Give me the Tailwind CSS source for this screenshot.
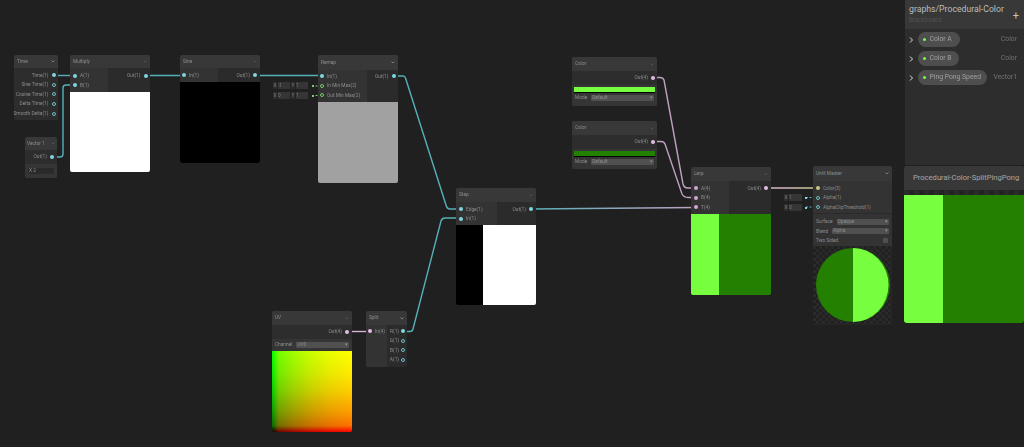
<!DOCTYPE html>
<html lang="en">
<head>
<meta charset="UTF-8">
<title>graphs/Procedural-Color</title>
<script src="https://cdn.jsdelivr.net/npm/@tailwindcss/browser@4"></script>
</head>
<body class="bg-[#202020]">
<div class="relative w-[1024px] h-[447px] overflow-hidden bg-[#202020] blur-[0.35px] font-['Roboto',sans-serif] text-[4.800px] leading-[9.600px] text-[#8e8e8e]">

  <!-- wires sit under the nodes -->
  <svg class="absolute left-0 top-0" width="1024" height="447" fill="none" stroke-width="1.400">
    <defs>
      <linearGradient id="stepLerp" gradientUnits="userSpaceOnUse" x1="531" y1="0" x2="696" y2="0">
        <stop offset="0" stop-color="#56b0b8"/><stop offset="1" stop-color="#c0a0c0"/>
      </linearGradient>
      <linearGradient id="lerpMaster" gradientUnits="userSpaceOnUse" x1="766" y1="0" x2="818" y2="0">
        <stop offset="0" stop-color="#d8b4d8"/><stop offset="1" stop-color="#c9c58a"/>
      </linearGradient>
    </defs>
    <g stroke="#56b0b8">
      <path d="M54 75.500H74"/>
      <path d="M52 157H60Q63 157 63 154V88Q63 85 66 85H74"/>
      <path d="M145 75.500H184"/>
      <path d="M255 75.500H322"/>
      <path d="M393 76H403Q405 76 405.500 78L446 205Q447 209 450 209H461"/>
      <path d="M403 331.500H410Q412.500 331.500 413 329L441 221Q442 218 445 218H461"/>
    </g>
    <path d="M531 209L696 207.500" stroke="url(#stepLerp)"/>
    <path d="M766 188H818" stroke="url(#lerpMaster)"/>
    <g stroke="#c0a0c0">
      <path d="M653 77.500H660Q663 77.500 664 80L683 184Q684 188 688 188H696"/>
      <path d="M653 141.500H661Q664 141.500 665 144L682 194Q684 197.500 688 197.500H696"/>
      <path d="M347 331.500H370" stroke="#d8b4d8"/>
    </g>
    <g stroke="#7fc96f" stroke-dasharray="2 1.500" stroke-width="1">
      <path d="M312 86H322"/>
      <path d="M312 95.500H322"/>
    </g>
    <g stroke="#56b0b8" stroke-dasharray="2 1.500" stroke-width="1">
      <path d="M806 197.500H818"/>
      <path d="M806 207H818"/>
    </g>
  </svg>

  <!-- Time -->
  <div class="absolute left-[14px] top-[55px] w-[44px] h-[65px] rounded-[2px] bg-[#2d2d2d] flex flex-col">
    <div class="h-[13px] shrink-0 bg-[#383838] rounded-t-[2px] px-[3px] flex items-center justify-between"><span>Time</span><svg width="4" height="3" viewBox="0 0 4 3" fill="none" stroke="#999" stroke-width=".7"><path d="M.5.5 2 2 3.500.5"/></svg></div>
    <div class="flex flex-col items-end pt-[2.500px] pr-[2.500px]">
      <div class="flex items-center gap-[3px] h-[9.600px]"><span>Time(1)</span><span class="w-[4px] h-[4px] rounded-full bg-[#7fd6de]"></span></div>
      <div class="flex items-center gap-[3px] h-[9.600px]"><span>Sine Time(1)</span><span class="w-[4px] h-[4px] rounded-full border border-[#6cc0c8]"></span></div>
      <div class="flex items-center gap-[3px] h-[9.600px]"><span>Cosine Time(1)</span><span class="w-[4px] h-[4px] rounded-full border border-[#6cc0c8]"></span></div>
      <div class="flex items-center gap-[3px] h-[9.600px]"><span>Delta Time(1)</span><span class="w-[4px] h-[4px] rounded-full border border-[#6cc0c8]"></span></div>
      <div class="flex items-center gap-[3px] h-[9.600px] whitespace-nowrap"><span>Smooth Delta(1)</span><span class="w-[4px] h-[4px] rounded-full border border-[#6cc0c8]"></span></div>
    </div>
  </div>

  <!-- Vector 1 -->
  <div class="absolute left-[25px] top-[137px] w-[32px] h-[41px] rounded-[2px] bg-[#2d2d2d] flex flex-col">
    <div class="h-[13px] shrink-0 bg-[#383838] rounded-t-[2px] px-[2px] flex items-center justify-between"><span class="whitespace-nowrap">Vector 1</span><svg width="4" height="3" viewBox="0 0 4 3" fill="none" stroke="#5a5a5a" stroke-width=".7"><path d="M.5.5 2 2 3.500.5"/></svg></div>
    <div class="flex items-center justify-end gap-[3px] h-[14px] pr-[3px]"><span>Out(1)</span><span class="w-[4px] h-[4px] rounded-full bg-[#7fd6de]"></span></div>
    <div class="flex-1 bg-[#353535] rounded-b-[2px] flex items-center px-[3px]"><span class="w-full h-[6px] bg-[#2a2a2a] leading-[6px] px-[1px]">X 2</span></div>
  </div>

  <!-- Multiply -->
  <div class="absolute left-[70px] top-[55px] w-[80px] h-[117px] rounded-[2px] bg-[#2b2b2b] flex flex-col overflow-hidden">
    <div class="h-[13px] shrink-0 bg-[#383838] px-[3px] flex items-center justify-between"><span>Multiply</span><svg width="4" height="3" viewBox="0 0 4 3" fill="none" stroke="#5a5a5a" stroke-width=".7"><path d="M.5.5 2 2 3.500.5"/></svg></div>
    <div class="h-[24px] shrink-0 flex">
      <div class="w-[38px] bg-[#333333] pt-[3px] pl-[3px]">
        <div class="flex items-center gap-[3px] h-[9.600px]"><span class="w-[4px] h-[4px] rounded-full bg-[#7fd6de]"></span><span>A(1)</span></div>
        <div class="flex items-center gap-[3px] h-[9.600px]"><span class="w-[4px] h-[4px] rounded-full bg-[#7fd6de]"></span><span>B(1)</span></div>
      </div>
      <div class="flex-1 pt-[3px] pr-[2.500px]">
        <div class="flex items-center justify-end gap-[3px] h-[9.600px]"><span>Out(1)</span><span class="w-[4px] h-[4px] rounded-full bg-[#7fd6de]"></span></div>
      </div>
    </div>
    <div class="flex-1 bg-white"></div>
  </div>

  <!-- Sine -->
  <div class="absolute left-[180px] top-[55px] w-[80px] h-[108px] rounded-[2px] bg-[#2b2b2b] flex flex-col overflow-hidden">
    <div class="h-[13px] shrink-0 bg-[#383838] px-[3px] flex items-center justify-between"><span>Sine</span><svg width="4" height="3" viewBox="0 0 4 3" fill="none" stroke="#5a5a5a" stroke-width=".7"><path d="M.5.5 2 2 3.500.5"/></svg></div>
    <div class="h-[14px] shrink-0 flex">
      <div class="w-[38px] bg-[#333333] pt-[2.500px] pl-[2px]">
        <div class="flex items-center gap-[3px] h-[9.600px]"><span class="w-[4px] h-[4px] rounded-full bg-[#7fd6de]"></span><span>In(1)</span></div>
      </div>
      <div class="flex-1 pt-[2.500px] pr-[3px]">
        <div class="flex items-center justify-end gap-[3px] h-[9.600px]"><span>Out(1)</span><span class="w-[4px] h-[4px] rounded-full bg-[#7fd6de]"></span></div>
      </div>
    </div>
    <div class="flex-1 bg-black"></div>
  </div>

  <!-- Remap inline values -->
  <div class="absolute left-[273px] top-[82px] w-[44px] h-[7.500px] flex items-center gap-[1px] leading-[7px] text-[#7c7c7c]">
    <span class="bg-[#2d2d2d] w-[4px] text-center">X</span><span class="bg-[#353535] w-[12px]">-1</span><span class="bg-[#2d2d2d] w-[4px] text-center">Y</span><span class="bg-[#353535] w-[12px]">1</span><span class="w-[2px] h-[2px] ml-[3px] bg-[#7fc96f]"></span>
  </div>
  <div class="absolute left-[273px] top-[92px] w-[44px] h-[7.500px] flex items-center gap-[1px] leading-[7px] text-[#7c7c7c]">
    <span class="bg-[#2d2d2d] w-[4px] text-center">X</span><span class="bg-[#353535] w-[12px]">0</span><span class="bg-[#2d2d2d] w-[4px] text-center">Y</span><span class="bg-[#353535] w-[12px]">1</span><span class="w-[2px] h-[2px] ml-[3px] bg-[#7fc96f]"></span>
  </div>

  <!-- Remap -->
  <div class="absolute left-[318px] top-[55px] w-[80px] h-[128px] rounded-[2px] bg-[#2b2b2b] flex flex-col overflow-hidden">
    <div class="h-[15px] shrink-0 bg-[#383838] px-[3px] flex items-center justify-between"><span>Remap</span><svg width="4" height="3" viewBox="0 0 4 3" fill="none" stroke="#999" stroke-width=".7"><path d="M.5.5 2 2 3.500.5"/></svg></div>
    <div class="h-[32px] shrink-0 flex">
      <div class="w-[49px] bg-[#333333] pt-[1.500px] pl-[2px] whitespace-nowrap">
        <div class="flex items-center gap-[3px] h-[9.600px]"><span class="w-[4px] h-[4px] rounded-full bg-[#7fd6de]"></span><span>In(1)</span></div>
        <div class="flex items-center gap-[3px] h-[9.600px]"><span class="w-[4px] h-[4px] rounded-full border border-[#7fc96f]"></span><span>In Min Max(2)</span></div>
        <div class="flex items-center gap-[3px] h-[9.600px]"><span class="w-[4px] h-[4px] rounded-full border border-[#7fc96f]"></span><span>Out Min Max(2)</span></div>
      </div>
      <div class="flex-1 pt-[1.500px] pr-[2.500px]">
        <div class="flex items-center justify-end gap-[3px] h-[9.600px]"><span>Out(1)</span><span class="w-[4px] h-[4px] rounded-full bg-[#7fd6de]"></span></div>
      </div>
    </div>
    <div class="flex-1 bg-[#a1a1a1]"></div>
  </div>

  <!-- Step -->
  <div class="absolute left-[456px] top-[188px] w-[80px] h-[117px] rounded-[2px] bg-[#2b2b2b] flex flex-col overflow-hidden">
    <div class="h-[14px] shrink-0 bg-[#383838] px-[3px] flex items-center justify-between"><span>Step</span><svg width="4" height="3" viewBox="0 0 4 3" fill="none" stroke="#5a5a5a" stroke-width=".7"><path d="M.5.5 2 2 3.500.5"/></svg></div>
    <div class="h-[23px] shrink-0 flex">
      <div class="w-[41px] bg-[#333333] pt-[2.500px] pl-[3px]">
        <div class="flex items-center gap-[3px] h-[9.600px]"><span class="w-[4px] h-[4px] rounded-full bg-[#7fd6de]"></span><span>Edge(1)</span></div>
        <div class="flex items-center gap-[3px] h-[9.600px]"><span class="w-[4px] h-[4px] rounded-full bg-[#7fd6de]"></span><span>In(1)</span></div>
      </div>
      <div class="flex-1 pt-[2.500px] pr-[3px]">
        <div class="flex items-center justify-end gap-[3px] h-[9.600px]"><span>Out(1)</span><span class="w-[4px] h-[4px] rounded-full bg-[#7fd6de]"></span></div>
      </div>
    </div>
    <div class="flex-1 flex"><div class="w-[27px] bg-black"></div><div class="flex-1 bg-white"></div></div>
  </div>

  <!-- UV -->
  <div class="absolute left-[272px] top-[311px] w-[80px] h-[121px] rounded-[2px] bg-[#2d2d2d] flex flex-col overflow-hidden">
    <div class="h-[14px] shrink-0 bg-[#383838] px-[3px] flex items-center justify-between"><span>UV</span><svg width="4" height="3" viewBox="0 0 4 3" fill="none" stroke="#5a5a5a" stroke-width=".7"><path d="M.5.5 2 2 3.500.5"/></svg></div>
    <div class="h-[14px] shrink-0 flex items-center justify-end gap-[3px] pr-[3px]"><span>Out(4)</span><span class="w-[4px] h-[4px] rounded-full bg-[#e2bde2]"></span></div>
    <div class="h-[12px] shrink-0 bg-[#353535] flex items-center gap-[4px] px-[3px]"><span>Channel</span><span class="flex-1 h-[6px] rounded-[1px] bg-[#505050] leading-[6px] px-[1px] flex justify-between"><span>UV0</span><span>▾</span></span></div>
    <div class="relative flex-1 bg-[linear-gradient(to_right,#000,#700000_8%,#9c0000_25%,#cc0000_50%,#ec0000_75%,#ff0000)]">
      <div class="absolute inset-0 mix-blend-screen bg-[linear-gradient(to_top,#000,#007000_8%,#009c00_25%,#00cc00_50%,#00ec00_75%,#00ff00)]"></div>
    </div>
  </div>

  <!-- Split -->
  <div class="absolute left-[366px] top-[311px] w-[41px] h-[56px] rounded-[2px] bg-[#2b2b2b] flex flex-col overflow-hidden">
    <div class="h-[14px] shrink-0 bg-[#383838] px-[3px] flex items-center justify-between"><span>Split</span><svg width="4" height="3" viewBox="0 0 4 3" fill="none" stroke="#999" stroke-width=".7"><path d="M.5.5 2 2 3.500.5"/></svg></div>
    <div class="flex-1 flex">
      <div class="w-[21px] bg-[#333333] pt-[1.500px] pl-[2px]">
        <div class="flex items-center gap-[3px] h-[9.600px]"><span class="w-[4px] h-[4px] rounded-full bg-[#e2bde2]"></span><span>In(4)</span></div>
      </div>
      <div class="flex-1 pt-[1.500px] pr-[2px] flex flex-col items-end">
        <div class="flex items-center gap-[2px] h-[9.600px]"><span>R(1)</span><span class="w-[4px] h-[4px] rounded-full bg-[#7fd6de]"></span></div>
        <div class="flex items-center gap-[2px] h-[9.600px]"><span>G(1)</span><span class="w-[4px] h-[4px] rounded-full border border-[#6cc0c8]"></span></div>
        <div class="flex items-center gap-[2px] h-[9.600px]"><span>B(1)</span><span class="w-[4px] h-[4px] rounded-full border border-[#6cc0c8]"></span></div>
        <div class="flex items-center gap-[2px] h-[9.600px]"><span>A(1)</span><span class="w-[4px] h-[4px] rounded-full border border-[#6cc0c8]"></span></div>
      </div>
    </div>
  </div>

  <!-- Color A -->
  <div class="absolute left-[572px] top-[57px] w-[85px] h-[49px] rounded-[2px] bg-[#2d2d2d] flex flex-col overflow-hidden">
    <div class="h-[14px] shrink-0 bg-[#383838] px-[3px] flex items-center justify-between"><span>Color</span><svg width="4" height="3" viewBox="0 0 4 3" fill="none" stroke="#5a5a5a" stroke-width=".7"><path d="M.5.5 2 2 3.500.5"/></svg></div>
    <div class="h-[14px] shrink-0 flex items-center justify-end gap-[3px] pr-[2px]"><span>Out(4)</span><span class="w-[4px] h-[4px] rounded-full bg-[#e2bde2]"></span></div>
    <div class="flex-1 bg-[#353535] px-[2px] pt-[2px]">
      <div class="h-[6px] bg-[#77ff3f] border-b border-black"></div>
      <div class="flex items-center gap-[4px] h-[8px] mt-[1px] pl-[1px]"><span>Mode</span><span class="flex-1 h-[6px] mr-[1px] rounded-[1px] bg-[#505050] leading-[6px] px-[1px] flex justify-between"><span>Default</span><span>▾</span></span></div>
    </div>
  </div>

  <!-- Color B -->
  <div class="absolute left-[572px] top-[121px] w-[85px] h-[48px] rounded-[2px] bg-[#2d2d2d] flex flex-col overflow-hidden">
    <div class="h-[14px] shrink-0 bg-[#383838] px-[3px] flex items-center justify-between"><span>Color</span><svg width="4" height="3" viewBox="0 0 4 3" fill="none" stroke="#5a5a5a" stroke-width=".7"><path d="M.5.5 2 2 3.500.5"/></svg></div>
    <div class="h-[14px] shrink-0 flex items-center justify-end gap-[3px] pr-[2px]"><span>Out(4)</span><span class="w-[4px] h-[4px] rounded-full bg-[#e2bde2]"></span></div>
    <div class="flex-1 bg-[#353535] px-[2px] pt-[2px]">
      <div class="h-[6px] bg-[#238000] border-b border-black"></div>
      <div class="flex items-center gap-[4px] h-[8px] mt-[1px] pl-[1px]"><span>Mode</span><span class="flex-1 h-[6px] mr-[1px] rounded-[1px] bg-[#505050] leading-[6px] px-[1px] flex justify-between"><span>Default</span><span>▾</span></span></div>
    </div>
  </div>

  <!-- Lerp -->
  <div class="absolute left-[691px] top-[167px] w-[80px] h-[128px] rounded-[2px] bg-[#2b2b2b] flex flex-col overflow-hidden">
    <div class="h-[14px] shrink-0 bg-[#383838] px-[3px] flex items-center justify-between"><span>Lerp</span><svg width="4" height="3" viewBox="0 0 4 3" fill="none" stroke="#5a5a5a" stroke-width=".7"><path d="M.5.5 2 2 3.500.5"/></svg></div>
    <div class="h-[33px] shrink-0 flex">
      <div class="w-[38px] bg-[#333333] pt-[2.500px] pl-[3px]">
        <div class="flex items-center gap-[3px] h-[9.600px]"><span class="w-[4px] h-[4px] rounded-full bg-[#d3a7d3]"></span><span>A(4)</span></div>
        <div class="flex items-center gap-[3px] h-[9.600px]"><span class="w-[4px] h-[4px] rounded-full bg-[#d3a7d3]"></span><span>B(4)</span></div>
        <div class="flex items-center gap-[3px] h-[9.600px]"><span class="w-[4px] h-[4px] rounded-full bg-[#d3a7d3]"></span><span>T(4)</span></div>
      </div>
      <div class="flex-1 pt-[2.500px] pr-[3px]">
        <div class="flex items-center justify-end gap-[3px] h-[9.600px]"><span>Out(4)</span><span class="w-[4px] h-[4px] rounded-full bg-[#e2bde2]"></span></div>
      </div>
    </div>
    <div class="flex-1 flex"><div class="w-[28px] bg-[#77ff3f]"></div><div class="flex-1 bg-[#238000]"></div></div>
  </div>

  <!-- Unlit Master inline values -->
  <div class="absolute left-[784px] top-[194px] w-[24px] h-[7.500px] flex items-center gap-[1px] leading-[7px] text-[#7c7c7c]">
    <span class="bg-[#2d2d2d] w-[4px] text-center">X</span><span class="bg-[#353535] w-[13px]">1</span><span class="w-[2px] h-[2px] ml-[2px] bg-[#7fd6de]"></span>
  </div>
  <div class="absolute left-[784px] top-[204px] w-[24px] h-[7.500px] flex items-center gap-[1px] leading-[7px] text-[#7c7c7c]">
    <span class="bg-[#2d2d2d] w-[4px] text-center">X</span><span class="bg-[#353535] w-[13px]">0</span><span class="w-[2px] h-[2px] ml-[2px] bg-[#7fd6de]"></span>
  </div>

  <!-- Unlit Master -->
  <div class="absolute left-[813px] top-[166px] w-[79px] h-[159px] flex flex-col overflow-hidden rounded-[2px]">
    <div class="h-[15px] shrink-0 bg-[#383838] px-[3px] flex items-center justify-between"><span>Unlit Master</span><svg width="4" height="3" viewBox="0 0 4 3" fill="none" stroke="#999" stroke-width=".7"><path d="M.5.5 2 2 3.500.5"/></svg></div>
    <div class="h-[32px] shrink-0 bg-[#333333] pt-[2.500px] pl-[3px] whitespace-nowrap">
      <div class="flex items-center gap-[3px] h-[9.600px]"><span class="w-[4px] h-[4px] rounded-full bg-[#c9c58a]"></span><span>Color(3)</span></div>
      <div class="flex items-center gap-[3px] h-[9.600px]"><span class="w-[4px] h-[4px] rounded-full border border-[#6cc0c8]"></span><span>Alpha(1)</span></div>
      <div class="flex items-center gap-[3px] h-[9.600px]"><span class="w-[4px] h-[4px] rounded-full border border-[#6cc0c8]"></span><span>AlphaClipThreshold(1)</span></div>
    </div>
    <div class="h-[33px] shrink-0 bg-[#333333] border-t border-[#2a2a2a] px-[3px] pt-[3px]">
      <div class="flex items-center gap-[4px] h-[9.600px]"><span>Surface</span><span class="flex-1 h-[6px] rounded-[1px] bg-[#505050] leading-[6px] px-[1px] flex justify-between"><span>Opaque</span><span>▾</span></span></div>
      <div class="flex items-center gap-[4px] h-[9.600px]"><span>Blend</span><span class="flex-1 h-[6px] rounded-[1px] bg-[#505050] leading-[6px] px-[1px] flex justify-between"><span>Alpha</span><span>▾</span></span></div>
      <div class="flex items-center justify-between h-[9.600px]"><span>Two Sided</span><span class="w-[5px] h-[5px] mr-[1px] rounded-[1px] bg-[#505050]"></span></div>
    </div>
    <svg class="flex-1" viewBox="0 0 79 79" width="79" height="79">
      <defs>
        <pattern id="checker" width="6" height="6" patternUnits="userSpaceOnUse">
          <rect width="6" height="6" fill="#212121"/>
          <rect width="3" height="3" fill="#2a2a2a"/>
          <rect x="3" y="3" width="3" height="3" fill="#2a2a2a"/>
        </pattern>
      </defs>
      <rect width="79" height="79" fill="url(#checker)"/>
      <circle cx="40" cy="39" r="37" fill="#238000"/>
      <path d="M40 2A35.500 37 0 0 1 40 76Z" fill="#77ff3f"/>
    </svg>
  </div>

  <!-- Blackboard -->
  <div class="absolute left-[905px] top-0 w-[119px] h-[165px] bg-[#2d2d2d] flex flex-col">
    <div class="relative h-[29px] shrink-0 bg-[#383838] pl-[4px] pt-[3px]">
      <div class="text-[8.700px] leading-[12px] text-[#bcbcbc] whitespace-nowrap">graphs/Procedural-Color</div>
      <div class="text-[6.500px] leading-[9px] mt-[1px] text-[#505050]">Blackboard</div>
      <span class="absolute right-[5px] top-[10px] text-[11px] leading-[11px] text-[#c4c4c4]">+</span>
    </div>
    <div class="flex flex-col gap-[4px] pt-[3px] pl-[4px] pr-[7px] text-[6.800px] leading-[15px]">
      <div class="flex items-center h-[15px]"><svg class="w-[9px] shrink-0" width="9" height="6" viewBox="0 0 9 6" fill="none" stroke="#e0e0e0" stroke-width="1"><path d="M1 .5 3.500 3 1 5.500"/></svg><span class="flex items-center gap-[4px] h-[15px] w-[42px] rounded-full bg-[#4e4e4e] pl-[5px] text-[#a0a0a0]"><span class="w-[2.500px] h-[2.500px] rounded-full bg-[#77ff3f]"></span>Color A</span><span class="ml-auto text-[#727272]">Color</span></div>
      <div class="flex items-center h-[15px]"><svg class="w-[9px] shrink-0" width="9" height="6" viewBox="0 0 9 6" fill="none" stroke="#e0e0e0" stroke-width="1"><path d="M1 .5 3.500 3 1 5.500"/></svg><span class="flex items-center gap-[4px] h-[15px] w-[41px] rounded-full bg-[#4e4e4e] pl-[5px] text-[#a0a0a0]"><span class="w-[2.500px] h-[2.500px] rounded-full bg-[#77ff3f]"></span>Color B</span><span class="ml-auto text-[#727272]">Color</span></div>
      <div class="flex items-center h-[15px]"><svg class="w-[9px] shrink-0" width="9" height="6" viewBox="0 0 9 6" fill="none" stroke="#e0e0e0" stroke-width="1"><path d="M1 .5 3.500 3 1 5.500"/></svg><span class="flex items-center gap-[4px] h-[15px] w-[69px] rounded-full bg-[#4e4e4e] pl-[5px] text-[#a0a0a0] whitespace-nowrap"><span class="w-[2.500px] h-[2.500px] rounded-full bg-[#77ff3f]"></span>Ping Pong Speed</span><span class="ml-auto text-[#727272]">Vector1</span></div>
    </div>
  </div>

  <!-- Main preview -->
  <div class="absolute left-[904px] top-[166px] w-[120px] h-[157px] flex flex-col">
    <div class="h-[24px] shrink-0 bg-[#383838] rounded-t-[2px] flex items-center pl-[9px] text-[7.600px] text-[#a8a8a8] whitespace-nowrap">Procedural-Color-SplitPingPong</div>
    <div class="h-[5px] shrink-0 bg-[repeating-linear-gradient(90deg,#2a2a2a_0,#2a2a2a_5px,#232323_5px,#232323_10px)]"></div>
    <div class="flex-1 flex rounded-b-[3px] overflow-hidden"><div class="w-[39px] bg-[#77ff3f]"></div><div class="flex-1 bg-[#238000]"></div></div>
  </div>

</div>
</body>
</html>
